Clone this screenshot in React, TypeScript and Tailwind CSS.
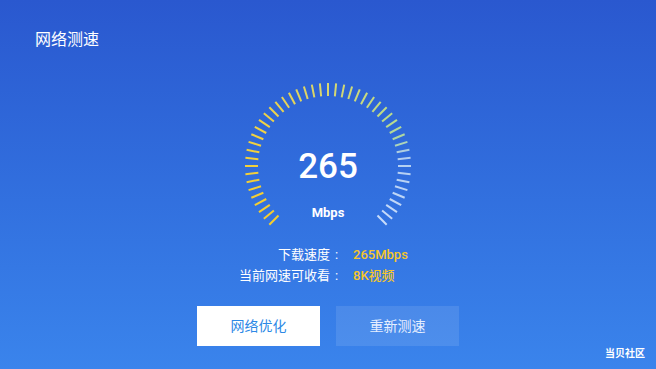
const TICKS = 49
const CX = 90
const CY = 88
const R_OUT = 83
const R_IN = 70

// colour stops along the dial, start (bottom-left) to end (bottom-right)
const STOPS: [number, [number, number, number]][] = [
  [0, [245, 205, 45]],
  [0.3, [240, 210, 70]],
  [0.5, [215, 215, 112]],
  [0.7, [186, 220, 140]],
  [0.76, [172, 214, 165]],
  [0.8, [176, 205, 240]],
  [1, [200, 220, 250]],
]

function tickColor(t: number) {
  for (let i = 0; i < STOPS.length - 1; i++) {
    const [a, ca] = STOPS[i]
    const [b, cb] = STOPS[i + 1]
    if (t <= b) {
      const k = (t - a) / (b - a)
      const c = ca.map((v, j) => Math.round(v + (cb[j] - v) * k))
      return `rgb(${c[0]},${c[1]},${c[2]})`
    }
  }
  return 'rgb(200,220,250)'
}

function Gauge() {
  const ticks = Array.from({ length: TICKS }, (_, i) => {
    const t = i / (TICKS - 1)
    const deg = -135 + 270 * t
    const rad = (deg * Math.PI) / 180
    const sx = Math.sin(rad)
    const sy = -Math.cos(rad)
    return (
      <line
        key={i}
        x1={CX + sx * R_IN}
        y1={CY + sy * R_IN}
        x2={CX + sx * R_OUT}
        y2={CY + sy * R_OUT}
        stroke={tickColor(t)}
        strokeWidth={2}
      />
    )
  })

  return (
    <div className="relative mx-auto mt-[28px] h-[150px] w-[180px]">
      <svg width="180" height="150" viewBox="0 0 180 150">
        {ticks}
      </svg>
      <div className="absolute inset-x-0 top-[67px] text-center text-[35px] font-medium leading-[44px] text-white">
        265
      </div>
      <div className="absolute inset-x-0 top-[126px] text-center text-[13px] font-bold leading-[18px] text-white">
        Mbps
      </div>
    </div>
  )
}

function Row({ label, value }: { label: string; value: string }) {
  return (
    <>
      <div className="flex justify-end">
        <span>{label}</span>
        <span className="w-[13px] text-center">:</span>
      </div>
      <div className="font-medium text-[#f6c62a]">{value}</div>
    </>
  )
}

export default function App() {
  return (
    <div
      className="relative flex h-[369px] w-full flex-col overflow-hidden bg-linear-to-b from-[#2a58cf] to-[#3a84ec] text-white"
      style={{ fontFamily: 'Roboto, "Noto Sans CJK SC", sans-serif' }}
    >
      {/* Title */}
      <div className="pl-[35px] pt-[30px] text-[16px] leading-[20px]">网络测速</div>

      <Gauge />

      {/* Result rows */}
      <div className="mt-[16px] grid grid-cols-[343px_auto] gap-x-[10px] text-[13px] leading-[21px]">
        <Row label="下载速度" value="265Mbps" />
        <Row label="当前网速可收看" value="8K视频" />
      </div>

      {/* Actions */}
      <div className="mt-[20px] flex justify-center gap-[16px]">
        <button className="flex h-[40px] w-[123px] items-center justify-center bg-white text-[14px] text-[#2d89e6]">
          网络优化
        </button>
        <button className="flex h-[40px] w-[123px] items-center justify-center bg-white/10 text-[14px] text-[#e6efff]">
          重新测速
        </button>
      </div>

      {/* Watermark */}
      <div className="absolute bottom-[8px] right-[11px] text-[10px] font-bold leading-[14px] text-white">
        当贝社区
      </div>
    </div>
  )
}
